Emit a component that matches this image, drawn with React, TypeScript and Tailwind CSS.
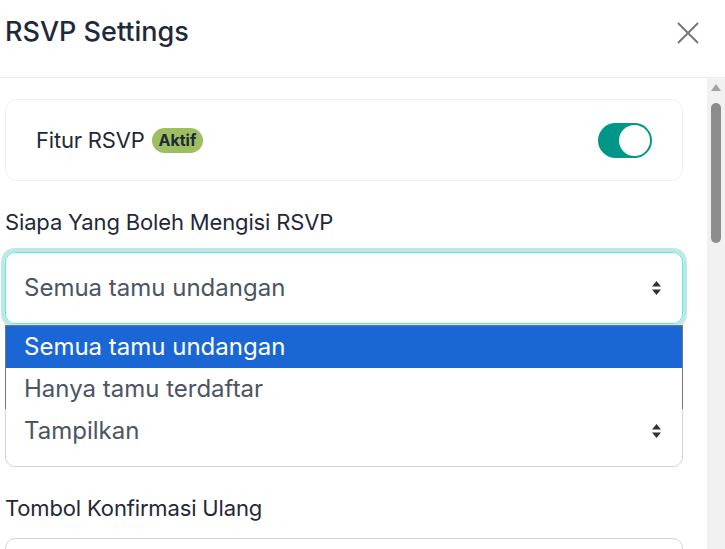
import React from "react";

function SortArrows() {
  return (
    <svg width="11" height="16" viewBox="0 0 11 16" className="shrink-0">
      <path d="M5.5 1 10 6.5H1Z" fill="#2f3337" />
      <path d="M5.5 15 10 9.5H1Z" fill="#2f3337" />
    </svg>
  );
}

function Label({ children }: { children?: React.ReactNode }) {
  return <div className="mt-[28px] mb-[16px] h-[27px] text-[22px] leading-[27px] text-[#1f2937] tracking-[-0.15px]">{children}</div>;
}

export default function App() {
  return (
    <div className="w-[725px] h-[549px] overflow-hidden bg-white font-['Inter',sans-serif] flex flex-col">
      <div className="h-[78px] shrink-0 flex items-center justify-between border-b border-[#eeeeee] pl-[5px] pr-[26px]">
        <h2 className="text-[27px] font-medium text-[#1e293b] -mt-[12px]">RSVP Settings</h2>
        <svg width="22" height="22" viewBox="0 0 22 22" className="-mt-[12px]" fill="none" stroke="#777" strokeWidth="2">
          <path d="M1 1 21 21M21 1 1 21" />
        </svg>
      </div>

      <div className="flex flex-1 min-h-0">
        <div className="w-[707px] shrink-0 pl-[5px] pr-[24px] pt-[21px] relative">
          <div className="h-[82px] rounded-[12px] border border-[#eeeeee] flex items-center justify-between pl-[30px] pr-[30px]">
            <div className="flex items-center gap-[7px]">
              <span className="text-[22px] text-[#1f2937] tracking-[-0.2px]">Fitur RSVP</span>
              <span className="h-[25px] px-[7px] rounded-full bg-[#9dbf62] text-[16px] font-bold text-[#1f2937] flex items-center">Aktif</span>
            </div>
            <div className="w-[54px] h-[35px] rounded-full bg-[#009688] flex items-center justify-end pr-[2px]">
              <div className="w-[31px] h-[31px] rounded-full bg-white" />
            </div>
          </div>

          <Label>Siapa Yang Boleh Mengisi RSVP</Label>
          <div className="h-[72px] rounded-[10px] border border-[#4ef0e6] ring-4 ring-[#c2e6e3] flex items-center justify-between pl-[18px] pr-[20px]">
            <span className="text-[24px] text-[#4b5563]">Semua tamu undangan</span>
            <SortArrows />
          </div>

          <Label />
          <div className="h-[72px] rounded-[10px] border border-[#d1d5db] flex items-center justify-between pl-[18px] pr-[20px]">
            <span className="text-[24px] text-[#4b5563]">Tampilkan</span>
            <SortArrows />
          </div>

          <Label>Tombol Konfirmasi Ulang</Label>
          <div className="h-[72px] rounded-[10px] border border-[#d1d5db]" />

          <div className="absolute left-[5px] top-[247px] w-[678px] border border-[#767676] border-b-0 bg-white text-[24px]">
            <div className="h-[42px] bg-[#1a66d4] text-white flex items-center pl-[18px]">Semua tamu undangan</div>
            <div className="h-[41px] text-[#4b5563] flex items-center pl-[18px]">Hanya tamu terdaftar</div>
          </div>
        </div>

        <div className="w-[18px] bg-[#f1f1f1] flex flex-col items-center pt-[6px]">
          <svg width="10" height="7" viewBox="0 0 10 7">
            <path d="M5 0 10 7H0Z" fill="#a3a3a3" />
          </svg>
          <div className="mt-[12px] w-[10px] h-[140px] rounded-full bg-[#8c8c8c]" />
        </div>
      </div>
    </div>
  );
}
